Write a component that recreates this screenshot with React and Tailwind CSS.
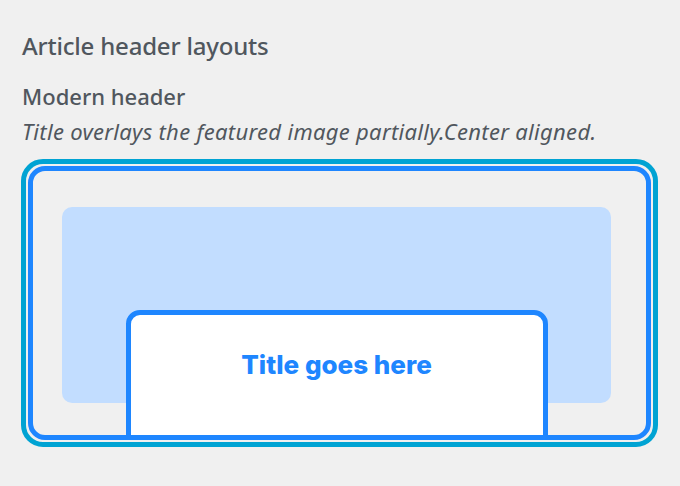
export default function App() {
  return (
    <div className="w-[680px] h-[486px] bg-[#f0f0f0] overflow-hidden" style={{ fontFamily: '"Noto Sans", sans-serif' }}>
      <div className="pt-[30px] pl-[21px] flex flex-col">
        <h2 className="pl-px text-[24px] leading-[32px] text-[#50575e] font-medium tracking-[-0.2px]">Article header layouts</h2>
        <h3 className="pl-px mt-[20px] text-[22px] leading-[28px] text-[#50575e] font-medium">Modern header</h3>
        <p className="pl-px mt-[7px] text-[22px] leading-[28px] text-[#50575e] italic tracking-[0.3px]">Title overlays the featured image partially.Center aligned.</p>
        <div className="mt-[14px] w-[637px] h-[288px] rounded-[22px] border-[5px] border-[#00a3d3] p-[2px]">
          <div className="w-full h-full rounded-[17px] border-[5px] border-[#1e86ff] overflow-hidden pl-[29px] pr-[35px] pt-[36px] flex flex-col">
            <div className="w-full h-[196px] rounded-[10px] bg-[#c2ddff] shrink-0"></div>
            <div className="self-center -mt-[93px] w-[422px] h-[140px] shrink-0 bg-white border-[5px] border-[#1e86ff] rounded-t-[14px] flex justify-center pt-[35px]">
              <span className="text-[26px] leading-[30px] font-extrabold text-[#1e86ff]" style={{ fontFamily: 'Inter, sans-serif' }}>Title goes here</span>
            </div>
          </div>
        </div>
      </div>
    </div>
  );
}
